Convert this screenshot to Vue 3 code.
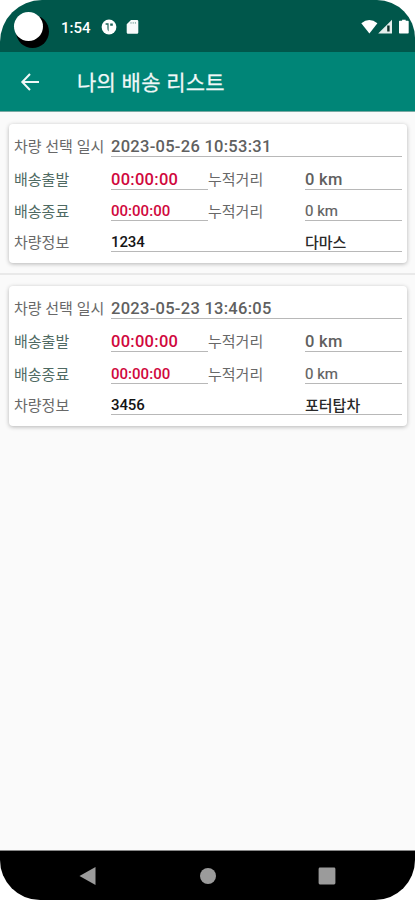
<script setup>
const deliveries = [
  { selectedAt: '2023-05-26 10:53:31', start: '00:00:00', startKm: '0 km', end: '00:00:00', endKm: '0 km', number: '1234', model: '다마스' },
  { selectedAt: '2023-05-23 13:46:05', start: '00:00:00', startKm: '0 km', end: '00:00:00', endKm: '0 km', number: '3456', model: '포터탑차' },
]
</script>

<template>
  <div class="screen">
    <header class="status">
      <span class="camera"></span>
      <span class="clock">1:54</span>
      <svg class="app-icon" width="16" height="16" viewBox="0 0 16 16">
        <circle cx="8" cy="8" r="7.4" fill="#fff" />
        <path d="M4.6 4.2H7.6V12.4Q6.4 12.2 6.4 9V5.8H4.6zM9.2 4.4h2.6v2.4H9.2z" fill="#1f655b" />
      </svg>
      <svg class="sd-icon" width="13" height="16" viewBox="0 0 13 16">
        <path d="M5 1h6a1.3 1.3 0 0 1 1.3 1.3v11.2a1.3 1.3 0 0 1-1.3 1.3H2a1.3 1.3 0 0 1-1.3-1.3V5.2z" fill="#f8fafa" />
        <path d="M5 3v1.8M7.2 3v1.8M9.4 3v1.8" stroke="#8fb0ab" stroke-width="1" />
      </svg>
      <div class="signals">
        <svg width="48" height="16" viewBox="0 0 48 16">
          <path d="M.3 4.2Q8.3-2.4 16.4 4.2L8.4 14.4z" fill="#fff" />
          <path d="M31 .8V14.6H17.2z" fill="#e4eeec" />
          <path d="M26.2 6.5h2.4v6h-2.4z" fill="#0d2f29" />
          <path d="M38.7 1.8h2.4V.7h3.6v1.1h2.3q.7 0 .7.8v11.2q0 .8-.7.8h-8.3q-.7 0-.7-.8V2.6q0-.8.7-.8z" fill="#fff" />
        </svg>
      </div>
    </header>

    <nav class="toolbar">
      <svg width="20" height="20" viewBox="0 0 20 20" fill="none" stroke="#f0f8f7" stroke-width="2">
        <path d="M19 10H3M10 2L2.3 10l7.7 8" />
      </svg>
      <h1>나의 배송 리스트</h1>
    </nav>

    <main>
      <section v-for="item in deliveries" :key="item.selectedAt" class="item">
        <div class="card">
          <div class="row date">
            <span class="label">차량 선택 일시</span>
            <span class="field full big">{{ item.selectedAt }}</span>
          </div>
          <div class="row start">
            <span class="label green">배송출발</span>
            <span class="field red big">{{ item.start }}</span>
            <span class="label">누적거리</span>
            <span class="field big">{{ item.startKm }}</span>
          </div>
          <div class="row end">
            <span class="label green">배송종료</span>
            <span class="field red">{{ item.end }}</span>
            <span class="label">누적거리</span>
            <span class="field light">{{ item.endKm }}</span>
          </div>
          <div class="row vehicle">
            <span class="label">차량정보</span>
            <span class="field number">{{ item.number }}</span>
            <span class="field model">{{ item.model }}</span>
          </div>
        </div>
      </section>
    </main>

    <footer class="navbar">
      <svg width="18" height="20" viewBox="0 0 18 20"><path d="M.5 10L16.5 1v18z" fill="#9b9b9b" /></svg>
      <svg width="18" height="20" viewBox="0 0 18 20"><circle cx="9" cy="10" r="8" fill="#9b9b9b" /></svg>
      <svg width="18" height="20" viewBox="0 0 18 20"><rect x=".6" y="1.6" width="16.8" height="16.8" rx="1.3" fill="#9b9b9b" /></svg>
    </footer>
  </div>
</template>

<style>
body { background: #fff; }
</style>

<style scoped>
* { box-sizing: border-box; }
.screen {
  width: 415px;
  height: 900px;
  display: flex;
  flex-direction: column;
  overflow: hidden;
  border-radius: 42px 38px 40px 40px;
  background: #fafafa;
  font-family: Roboto, "Noto Sans CJK KR", sans-serif;
}
.status {
  flex: none;
  height: 52px;
  padding: 0 0 0 14px;
  display: flex;
  align-items: center;
  background: #00574b;
  color: #fff;
}
.camera {
  width: 29px;
  height: 29px;
  margin-top: 1px;
  border-radius: 50%;
  background: #fff;
  box-shadow: 4px 5px 0 2px #000;
}
.clock {
  width: 41px;
  margin-left: 18px;
  padding-top: 3px;
  font-size: 15px;
  font-weight: 500;
}
.app-icon { margin: 2px 0 0 -1px; }
.sd-icon { margin: 2px 0 0 9px; }
.signals { display: flex; margin-left: auto; margin-right: 6px; padding-top: 2px; }
.toolbar {
  flex: none;
  height: 60px;
  padding: 1px 0 0 20px;
  display: flex;
  align-items: center;
  background: #008577;
  border-bottom: 1px solid #79a9a3;
}
.toolbar h1 {
  margin: 2px 0 0 37px;
  font-size: 21px;
  line-height: 30px;
  letter-spacing: .25px;
  font-weight: 400;
  color: #f1f8f7;
  -webkit-text-stroke: .25px #f1f8f7;
  white-space: nowrap;
}
main { flex: 1; min-height: 0; }
.item { height: 163px; padding: 12px 8px 0 9px; }
.item:first-child { border-bottom: 2px solid #e9e9e9; }
.item + .item { padding-top: 11px; }
.card {
  height: 139px;
  padding: 10px 5px 0;
  border-radius: 4px;
  background: #fff;
  box-shadow: 0 1px 4px rgba(0, 0, 0, .28);
}
.item + .item .card { height: 140px; }
.row {
  display: grid;
  grid-template-columns: 97px 97px 97px 97px;
  align-items: end;
}
.date { height: 23px; }
.start { height: 33px; }
.end { height: 31px; }
.vehicle { height: 31px; }
.item + .item .end { height: 32px; }
.label {
  height: 20px;
  line-height: 20px;
  font-size: 15px;
  color: #686868;
  white-space: nowrap;
}
.end .label, .vehicle .label { line-height: 22px; }
.date .label { line-height: 20px; }
.green { color: #4f6a63; }
.field {
  height: 20px;
  line-height: 21px;
  border-bottom: 1px solid #b8b8b8;
  font-size: 15px;
  font-weight: 500;
  letter-spacing: .02px;
  color: #606060;
  white-space: nowrap;
}
.full { grid-column: span 3; }
.big { line-height: 20px; font-size: 16.5px; letter-spacing: .28px; }
.red { color: #d0083d; }
.light { font-weight: 400; -webkit-text-stroke: .2px #606060; }
.number { grid-column: span 2; color: #151515; }
.vehicle .number { letter-spacing: -.1px; }
.model { line-height: 22px; color: #292929; letter-spacing: 0; }
.navbar {
  flex: none;
  height: 50px;
  padding: 0 79px;
  display: flex;
  align-items: center;
  justify-content: space-between;
  background: #000;
  border-top: 1px solid #888;
}
</style>
